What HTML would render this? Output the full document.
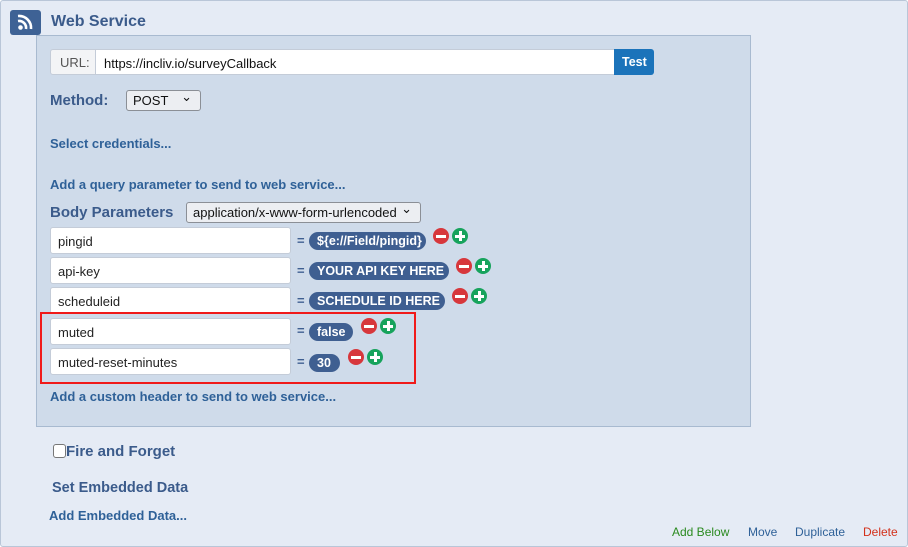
<!DOCTYPE html>
<html><head><style>
*{box-sizing:border-box;margin:0;padding:0}
body{width:908px;height:547px;background:#fff;font-family:"Liberation Sans",sans-serif;position:relative;overflow:hidden}
.a{position:absolute}
.lnk{color:#2f6198;font-weight:bold;font-size:13px}
.inp{position:absolute;left:50px;width:241px;height:27px;background:#fff;border:1px solid #c4ccd8;border-radius:3px;font-size:13px;color:#222;padding:6px 0 0 7px}
.eq{position:absolute;left:297px;color:#3f5f91;font-weight:bold;font-size:13px}
.pill{position:absolute;left:309px;height:18px;background:#3f5f91;color:#fff;border-radius:9px;font-weight:bold;font-size:12.5px;padding:2px 8px 0 8px;white-space:nowrap}
.c{position:absolute;width:16px;height:16px;border-radius:50%}
.c.r{background:#d7373c}.c.g{background:#17a35c}
.c:before{content:"";position:absolute;left:3px;top:6.5px;width:10px;height:3px;background:#fff}
.c.g:after{content:"";position:absolute;left:6.5px;top:3px;width:3px;height:10px;background:#fff}
.sel{position:absolute;background:#eceef2;border:1px solid #8b8f96;border-radius:3px;font-size:13px;color:#111;padding:2px 0 0 6px}
.sel:after{content:"⌄";position:absolute;right:8px;top:-2px;font-size:13px}
</style></head><body>
<div class="a" style="left:0;top:0;width:908px;height:547px;background:#e5ebf5;border:1px solid #b9c6d8;border-radius:3px"></div>
<div class="a" style="left:36px;top:35px;width:715px;height:392px;background:#cfdbea;border:1px solid #a8bad0"></div>
<div class="a" style="left:10px;top:10px;width:31px;height:25px;background:#3e6295;border-radius:3px">
<svg width="31" height="25" viewBox="0 0 31 25"><circle cx="10.5" cy="17.5" r="2.3" fill="#fff"/><path d="M8 11a7 7 0 0 1 8 8" stroke="#fff" stroke-width="2.6" fill="none"/><path d="M8 6a12 12 0 0 1 13 13" stroke="#fff" stroke-width="2.6" fill="none"/></svg></div>
<div class="a" style="left:51px;top:13px;font-size:16px;font-weight:bold;color:#3b5b8b">Web Service</div>

<div class="a" style="left:50px;top:49px;width:46px;height:26px;background:#f3f4f6;border:1px solid #c4ccd8;border-radius:3px 0 0 3px;font-size:13px;color:#555;padding:5px 0 0 9px">URL:</div>
<div class="a" style="left:95px;top:49px;width:520px;height:26px;background:#fff;border:1px solid #c4ccd8;font-size:13px;color:#111;padding:6px 0 0 8px">https://incliv.io/surveyCallback</div>
<div class="a" style="left:614px;top:49px;width:40px;height:26px;background:#1b73ba;border-radius:0 3px 3px 0;color:#fff;font-size:12.5px;font-weight:bold;padding:6px 0 0 8px">Test</div>

<div class="a" style="left:50px;top:92px;font-size:15px;font-weight:bold;color:#3b5b8b">Method:</div>
<div class="sel" style="left:126px;top:90px;width:75px;height:21px">POST</div>
<div class="a lnk" style="left:50px;top:136px">Select credentials...</div>
<div class="a lnk" style="left:50px;top:177px">Add a query parameter to send to web service...</div>
<div class="a" style="left:50px;top:204px;font-size:15px;font-weight:bold;color:#3b5b8b">Body Parameters</div>
<div class="sel" style="left:186px;top:202px;width:235px;height:21px">application/x-www-form-urlencoded</div>

<div class="inp" style="top:227px">pingid</div>
<div class="eq" style="top:233px">=</div>
<div class="pill" style="top:232px;width:117px">${e://Field/pingid}</div>
<div class="c r" style="left:433px;top:228px"></div><div class="c g" style="left:452px;top:228px"></div>

<div class="inp" style="top:257px">api-key</div>
<div class="eq" style="top:263px">=</div>
<div class="pill" style="top:262px;width:140px">YOUR API KEY HERE</div>
<div class="c r" style="left:456px;top:258px"></div><div class="c g" style="left:475px;top:258px"></div>

<div class="inp" style="top:287px">scheduleid</div>
<div class="eq" style="top:293px">=</div>
<div class="pill" style="top:292px;width:136px">SCHEDULE ID HERE</div>
<div class="c r" style="left:452px;top:288px"></div><div class="c g" style="left:471px;top:288px"></div>

<div class="inp" style="top:318px">muted</div>
<div class="eq" style="top:323px">=</div>
<div class="pill" style="top:323px;width:44px">false</div>
<div class="c r" style="left:361px;top:318px"></div><div class="c g" style="left:380px;top:318px"></div>

<div class="inp" style="top:348px">muted-reset-minutes</div>
<div class="eq" style="top:354px">=</div>
<div class="pill" style="top:354px;width:31px">30</div>
<div class="c r" style="left:348px;top:349px"></div><div class="c g" style="left:367px;top:349px"></div>

<div class="a" style="left:40px;top:312px;width:376px;height:72px;border:2px solid #f01a1a"></div>
<div class="a lnk" style="left:50px;top:389px">Add a custom header to send to web service...</div>

<div class="a" style="left:53px;top:444px;width:13px;height:14px;border:1px solid #777;border-radius:3px;background:#fff"></div>
<div class="a" style="left:66px;top:443px;font-size:15px;font-weight:bold;color:#3b5b8b">Fire and Forget</div>
<div class="a" style="left:52px;top:480px;font-size:14.5px;font-weight:bold;color:#3b5b8b">Set Embedded Data</div>
<div class="a lnk" style="left:49px;top:508px">Add Embedded Data...</div>
<div class="a" style="left:672px;top:525px;font-size:12px;color:#2a8a1f">Add Below</div>
<div class="a" style="left:748px;top:525px;font-size:12px;color:#2f6198">Move</div>
<div class="a" style="left:795px;top:525px;font-size:12px;color:#2f6198">Duplicate</div>
<div class="a" style="left:863px;top:525px;font-size:12px;color:#d3301a">Delete</div>
</body></html>
